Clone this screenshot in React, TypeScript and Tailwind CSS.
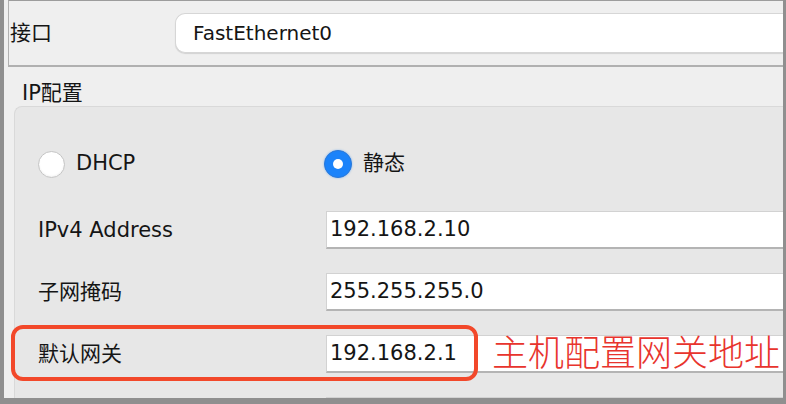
export default function App() {
  const font = { fontFamily: '"DejaVu Sans", "Noto Sans CJK SC", sans-serif' };

  return (
    <div
      className="w-[786px] h-[404px] overflow-hidden bg-[#8f8f8f] pl-[4px] pr-[3px] pb-[6px] text-[#151515]"
      style={font}
    >
      <div className="h-full bg-[#efefef] flex flex-col overflow-hidden">
        {/* interface row */}
        <div className="ml-[4px] h-[67px] shrink-0 border-t border-l border-b-2 border-t-[#9c9c9c] border-l-[#b0b0b0] border-b-[#b0b0b0] flex items-center">
          <div className="w-[166px] pl-[1px] text-[21px] leading-none">接口</div>
          <div className="flex-1 h-[40px] bg-white rounded-l-[10px] border border-r-0 border-[#d6d6d6] shadow-[0_1px_1px_rgba(0,0,0,0.12)] flex items-center pl-[17px] text-[20px]">
            FastEthernet0
          </div>
        </div>

        <div className="mt-[14px] pl-[18px] text-[21px] leading-[24px]">IP配置</div>

        {/* ip config panel */}
        <div className="mt-[1px] ml-[10px] flex-1 rounded-tl-[8px] bg-[#e7e7e7] border-t border-l border-[#d9d9d9] pl-[23px] pt-[43px] flex flex-col">
          <div className="h-[28px] flex items-center text-[21px]">
            <div className="w-[286px] flex items-center gap-[11px]">
              <span className="w-[27px] h-[27px] rounded-full bg-white border border-[#c4c4c4] shadow-[inset_0_-1px_2px_rgba(0,0,0,0.06)]" />
              <span>DHCP</span>
            </div>
            <div className="flex items-center gap-[11px]">
              <span className="w-[28px] h-[28px] rounded-full bg-[#1b83fa] border border-[#2a78d8] shadow-[0_0_2px_rgba(27,131,250,0.5)] flex items-center justify-center">
                <span className="w-[10px] h-[10px] rounded-full bg-white" />
              </span>
              <span>静态</span>
            </div>
          </div>

          <div className="mt-[33px] flex flex-col gap-[24px]">
            <Row label="IPv4 Address" value="192.168.2.10" />
            <Row label="子网掩码" value="255.255.255.0" />
            <div className="relative">
              <Row label="默认网关" value="192.168.2.1" />
              <div className="absolute left-[-27px] top-[-10px] w-[467px] h-[56px] rounded-[12px] border-[4px] border-[#f2482a]" />
              <div className="absolute left-[454px] top-0 h-full flex items-center text-[36px] leading-none font-light text-[#e8342d]">
                主机配置网关地址
              </div>
            </div>
            <Row label="" value="" />
          </div>
        </div>
      </div>
    </div>
  );
}

function Row({ label, value }: { label: string; value: string }) {
  return (
    <div className="h-[38px] flex items-center shrink-0">
      <div className="w-[288px] text-[21px] leading-none">{label}</div>
      <div className="flex-1 h-full bg-white border-t border-l border-[#d2d2d2] border-b-2 border-b-[#b4b4b4] flex items-center pl-[3px] text-[21px]">
        {value}
      </div>
    </div>
  );
}
